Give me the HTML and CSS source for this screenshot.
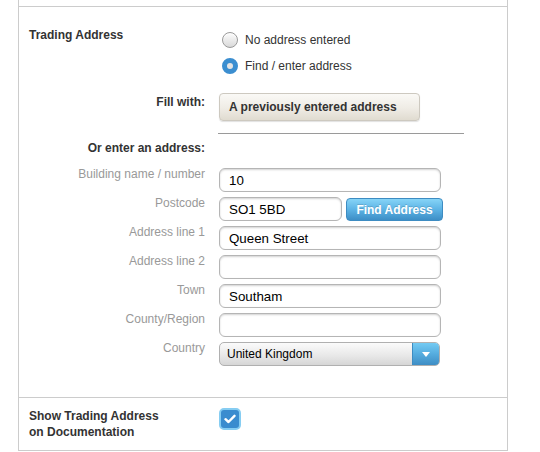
FILE: index.html
```html
<!DOCTYPE html>
<html lang="en">
<head>
    <meta charset="UTF-8">
    <title>Trading Address</title>
    <link rel="stylesheet" href="styles.css">
</head>
<body>
    <div class="panel">
        <div class="panel-top"></div>

        <!-- Trading address -->
        <section class="section section-address">
            <div class="row">
                <div class="label label-left">Trading Address</div>
                <div class="radios">
                    <label class="radio"><span class="radio-dot"></span>No address entered</label>
                    <label class="radio is-checked"><span class="radio-dot"></span>Find / enter address</label>
                </div>
            </div>

            <div class="row row-fill">
                <div class="label label-fill">Fill with:</div>
                <div><button class="btn-prev">A previously entered address</button></div>
            </div>

            <div class="row row-rule">
                <div></div>
                <hr class="rule">
            </div>

            <div class="row row-or">
                <div class="label">Or enter an address:</div>
            </div>

            <div class="fields">
                <div class="row">
                    <div class="label label-field">Building name / number</div>
                    <input class="input" type="text" value="10">
                </div>
                <div class="row">
                    <div class="label label-field">Postcode</div>
                    <div class="postcode">
                        <input class="input input-short" type="text" value="SO1 5BD">
                        <button class="btn-find">Find Address</button>
                    </div>
                </div>
                <div class="row">
                    <div class="label label-field">Address line 1</div>
                    <input class="input" type="text" value="Queen Street">
                </div>
                <div class="row">
                    <div class="label label-field">Address line 2</div>
                    <input class="input" type="text" value="">
                </div>
                <div class="row">
                    <div class="label label-field">Town</div>
                    <input class="input" type="text" value="Southam">
                </div>
                <div class="row">
                    <div class="label label-field">County/Region</div>
                    <input class="input" type="text" value="">
                </div>
                <div class="row">
                    <div class="label label-field">Country</div>
                    <div class="select">
                        <span class="select-text">United Kingdom</span>
                        <span class="select-arrow"></span>
                    </div>
                </div>
            </div>
        </section>

        <!-- Show on documentation -->
        <section class="section section-show">
            <div class="row">
                <div class="label label-left label-show">Show Trading Address<br>on Documentation</div>
                <div>
                    <span class="checkbox">
                        <svg width="12" height="10" viewBox="0 0 12 10"><path d="M1.5 5.2 L4.5 8 L10.5 1.8" fill="none" stroke="#fff" stroke-width="2.4" stroke-linecap="round" stroke-linejoin="round"/></svg>
                    </span>
                </div>
            </div>
        </section>
    </div>
</body>
</html>
```

FILE: styles.css
```css
/* General */
body {
    margin: 0;
    font-family: 'Liberation Sans', Arial, sans-serif;
    font-size: 12px;
    color: #333;
    background: #fff;
}

.panel {
    width: 490px;
    margin-left: 18px;
    box-sizing: border-box;
    border-left: 1px solid #ccc;
    border-right: 1px solid #ccc;
}

.panel-top {
    height: 6px;
}

.section {
    border-top: 1px solid #ccc;
    padding: 21px 10px 31px;
}

.section-show {
    padding: 10px 10px 10px;
    border-bottom: 1px solid #ccc;
}

.row {
    display: grid;
    grid-template-columns: 176px 1fr;
    column-gap: 14px;
}

/* Labels */
.label {
    font-weight: bold;
    font-size: 12px;
    line-height: 14px;
    color: #333;
    text-align: right;
}

.label-left {
    text-align: left;
}

.label-fill {
    padding-top: 2px;
}

.label-field {
    font-weight: normal;
    color: #999;
    margin-top: -1px;
}

.label-show {
    line-height: 16px;
}

/* Radios */
.radios {
    margin-top: 4px;
    display: flex;
    flex-direction: column;
    gap: 10px;
}

.radio {
    display: flex;
    align-items: center;
    height: 16px;
    gap: 7px;
    margin-left: 3px;
    color: #333;
}

.radio-dot {
    width: 16px;
    height: 16px;
    box-sizing: border-box;
    border-radius: 50%;
    border: 1px solid #9a9a9a;
    background: linear-gradient(#fdfdfd, #d9d9d9);
    box-shadow: inset 0 1px 1px rgba(255, 255, 255, 0.8);
}

.is-checked .radio-dot {
    border: 5px solid #3b8ed0;
    background: #e4e4e4;
    box-shadow: none;
}

/* Fill with */
.row-fill {
    margin-top: 19px;
}

.btn-prev {
    width: 201px;
    height: 28px;
    padding: 0 0 0 9px;
    text-align: left;
    font-family: inherit;
    font-size: 12px;
    font-weight: bold;
    color: #333;
    border: 1px solid #cdc9c0;
    border-radius: 4px;
    background: linear-gradient(#faf9f6, #efece5 55%, #e0dbd0);
    box-shadow: 0 1px 1px rgba(0, 0, 0, 0.12);
}

.row-rule {
    margin-top: 12px;
}

.rule {
    width: 246px;
    margin: 0 0 0 -1px;
    border: 0;
    border-top: 1px solid #9a9a9a;
}

.row-or {
    margin-top: 7px;
}

/* Address fields */
.fields {
    margin-top: 13px;
    display: flex;
    flex-direction: column;
    gap: 5px;
}

.input {
    width: 222px;
    height: 24px;
    box-sizing: border-box;
    margin: 0;
    padding: 0 9px;
    font-family: inherit;
    font-size: 13.33px;
    color: #000;
    border: 1px solid #b5b5b5;
    border-radius: 6px;
    background: #fff;
    box-shadow: inset 0 1px 2px rgba(0, 0, 0, 0.18);
    outline: none;
}

.postcode {
    display: flex;
    gap: 4px;
}

.input-short {
    width: 123px;
}

.btn-find {
    width: 97px;
    height: 23px;
    margin-top: 1px;
    padding: 0;
    font-family: inherit;
    font-size: 12px;
    font-weight: bold;
    color: #fff;
    border: 1px solid #3d8cc2;
    border-radius: 4px;
    background: linear-gradient(#86d4f7, #5cb3e5 50%, #3d8ec6);
    text-shadow: 0 -1px 0 rgba(0, 0, 0, 0.15);
}

.select {
    display: flex;
    width: 221px;
    height: 24px;
    box-sizing: border-box;
    border: 1px solid #b0b0b0;
    border-radius: 5px;
    overflow: hidden;
    background: linear-gradient(#fbfbfb, #e9e9e9 55%, #d6d6d6);
}

.select-text {
    flex: 1;
    padding-left: 7px;
    line-height: 22px;
    font-size: 12px;
    color: #000;
}

.select-arrow {
    width: 26px;
    position: relative;
    border-left: 1px solid #3d8cc2;
    background: linear-gradient(#74cbf3, #55acdf 50%, #3e8dc4);
}

.select-arrow::after {
    content: "";
    position: absolute;
    left: 9px;
    top: 9px;
    border-left: 4px solid transparent;
    border-right: 4px solid transparent;
    border-top: 5px solid #fff;
}

/* Checkbox */
.checkbox {
    display: flex;
    align-items: center;
    justify-content: center;
    width: 22px;
    height: 22px;
    box-sizing: border-box;
    border: 2px solid #86cdf2;
    border-radius: 5px;
    background: #3a8ccf;
}
```
